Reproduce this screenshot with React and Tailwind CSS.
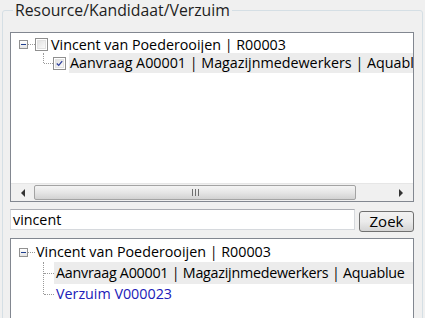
import React from 'react';

const font = { fontFamily: '"Open Sans", "Noto Sans", sans-serif' };

const MinusBox = () => (
  <div className="w-[9px] h-[9px] shrink-0 border border-[#919191] bg-gradient-to-b from-white to-[#e4e4e4] flex items-center justify-center">
    <div className="w-[5px] h-px bg-[#1f3f8f]" />
  </div>
);

const Checkbox = ({ checked }) => (
  <div className="w-[13px] h-[13px] shrink-0 border border-[#8f8f8f] bg-white p-px">
    <div className="w-full h-full border border-[#e2e2e2] bg-gradient-to-br from-[#e2e2e2] to-[#fafafa] flex items-center justify-center">
      {checked && (
        <svg width="9" height="9" viewBox="0 0 9 9">
          <path d="M1 4.5 L3.5 7 L8 1.5" stroke="#2d3f9c" strokeWidth="1.6" fill="none" />
        </svg>
      )}
    </div>
  </div>
);

const Scrollbar = () => (
  <div className="h-[18px] flex items-stretch bg-[#f0f0f0] border-t border-[#e6e6e6]">
    <div className="w-[23px] flex items-center justify-center">
      <div className="w-0 h-0 border-y-[4px] border-y-transparent border-r-[4px] border-r-[#333]" />
    </div>
    <div className="w-[322px] my-px border border-[#a3a3a3] rounded-[2px] bg-gradient-to-b from-[#f4f4f4] via-[#e6e6e6] to-[#d2d2d2] flex items-center justify-center">
      <div className="w-px h-[7px] bg-[#6f6f6f]" />
      <div className="w-px h-[7px] bg-[#6f6f6f] ml-[2px]" />
      <div className="w-px h-[7px] bg-[#6f6f6f] ml-[2px]" />
    </div>
    <div className="flex-1 flex items-center justify-end pr-[10px]">
      <div className="w-0 h-0 border-y-[4px] border-y-transparent border-l-[4px] border-l-[#333]" />
    </div>
  </div>
);

export default function App() {
  return (
    <div className="w-[425px] h-[318px] bg-[#f0f0f0] overflow-hidden text-[14.3px] text-black" style={font}>
      <fieldset className="min-w-0 mt-[2px] ml-[2px] mr-[2px] h-[340px] border border-[#d5dfe5] rounded-[3px] pl-[7px] pr-[8px]">
        <legend className="ml-[3px] px-[2px] text-[#1e1e1e] text-[15.8px] leading-[17px]">Resource/Kandidaat/Verzuim</legend>

        <div className="mt-[13px] h-[170px] border border-[#828790] bg-white flex flex-col">
          <div className="flex-1 overflow-hidden pt-[3px] whitespace-nowrap">
            <div className="flex items-center h-[17px] pl-[8px]">
              <MinusBox />
              <div className="w-[7px] border-t border-dotted border-[#9a9a9a]" />
              <Checkbox />
              <span className="ml-[3px]">Vincent van Poederooijen | R00003</span>
            </div>
            <div className="flex items-center h-[20px] pl-[32px]">
              <div className="w-px h-full flex flex-col">
                <div className="flex-1 border-l border-dotted border-[#9a9a9a]" />
                <div className="flex-1" />
              </div>
              <div className="w-[9px] border-t border-dotted border-[#9a9a9a]" />
              <Checkbox checked />
              <span className="ml-[3px] pl-[1px] flex-1 min-w-0 overflow-hidden h-full flex items-center bg-[#ececec]">
                Aanvraag A00001 | Magazijnmedewerkers | Aquablue
              </span>
            </div>
          </div>
          <Scrollbar />
        </div>

        <div className="mt-[7px] flex items-start gap-[4px]">
          <div className="w-[345px] h-[21px] border border-[#d6d9dd] border-t-[#abadb3] bg-white px-[2px] flex items-center">
            vincent
          </div>
          <button className="mt-[2px] w-[55px] h-[21px] border border-[#707070] rounded-[3px] bg-gradient-to-b from-[#f2f2f2] via-[#ebebeb] to-[#d4d4d4] text-[15px] leading-none">
            Zoek
          </button>
        </div>

        <div className="mt-[6px] h-[100px] border border-[#828790] bg-white pt-[3px] whitespace-nowrap overflow-hidden">
          <div className="flex items-center h-[20px] pl-[8px]">
            <MinusBox />
            <div className="w-[7px] border-t border-dotted border-[#9a9a9a]" />
            <span className="ml-[1px]">Vincent van Poederooijen | R00003</span>
          </div>
          <div className="flex h-[42px] pl-[32px]">
            <div className="w-px h-[32px] border-l border-dotted border-[#9a9a9a]" />
            <div className="flex-1 min-w-0 flex flex-col">
              <div className="flex items-center h-[22px]">
                <div className="w-[10px] border-t border-dotted border-[#9a9a9a]" />
                <span className="pl-[2px] flex-1 min-w-0 overflow-hidden h-full flex items-center bg-[#ececec] tracking-[-0.25px]">
                  Aanvraag A00001 | Magazijnmedewerkers | Aquablue
                </span>
              </div>
              <div className="flex items-center h-[20px]">
                <div className="w-[10px] border-t border-dotted border-[#9a9a9a]" />
                <span className="pl-[2px] text-[#2020b8]">Verzuim V000023</span>
              </div>
            </div>
          </div>
        </div>
      </fieldset>
    </div>
  );
}
